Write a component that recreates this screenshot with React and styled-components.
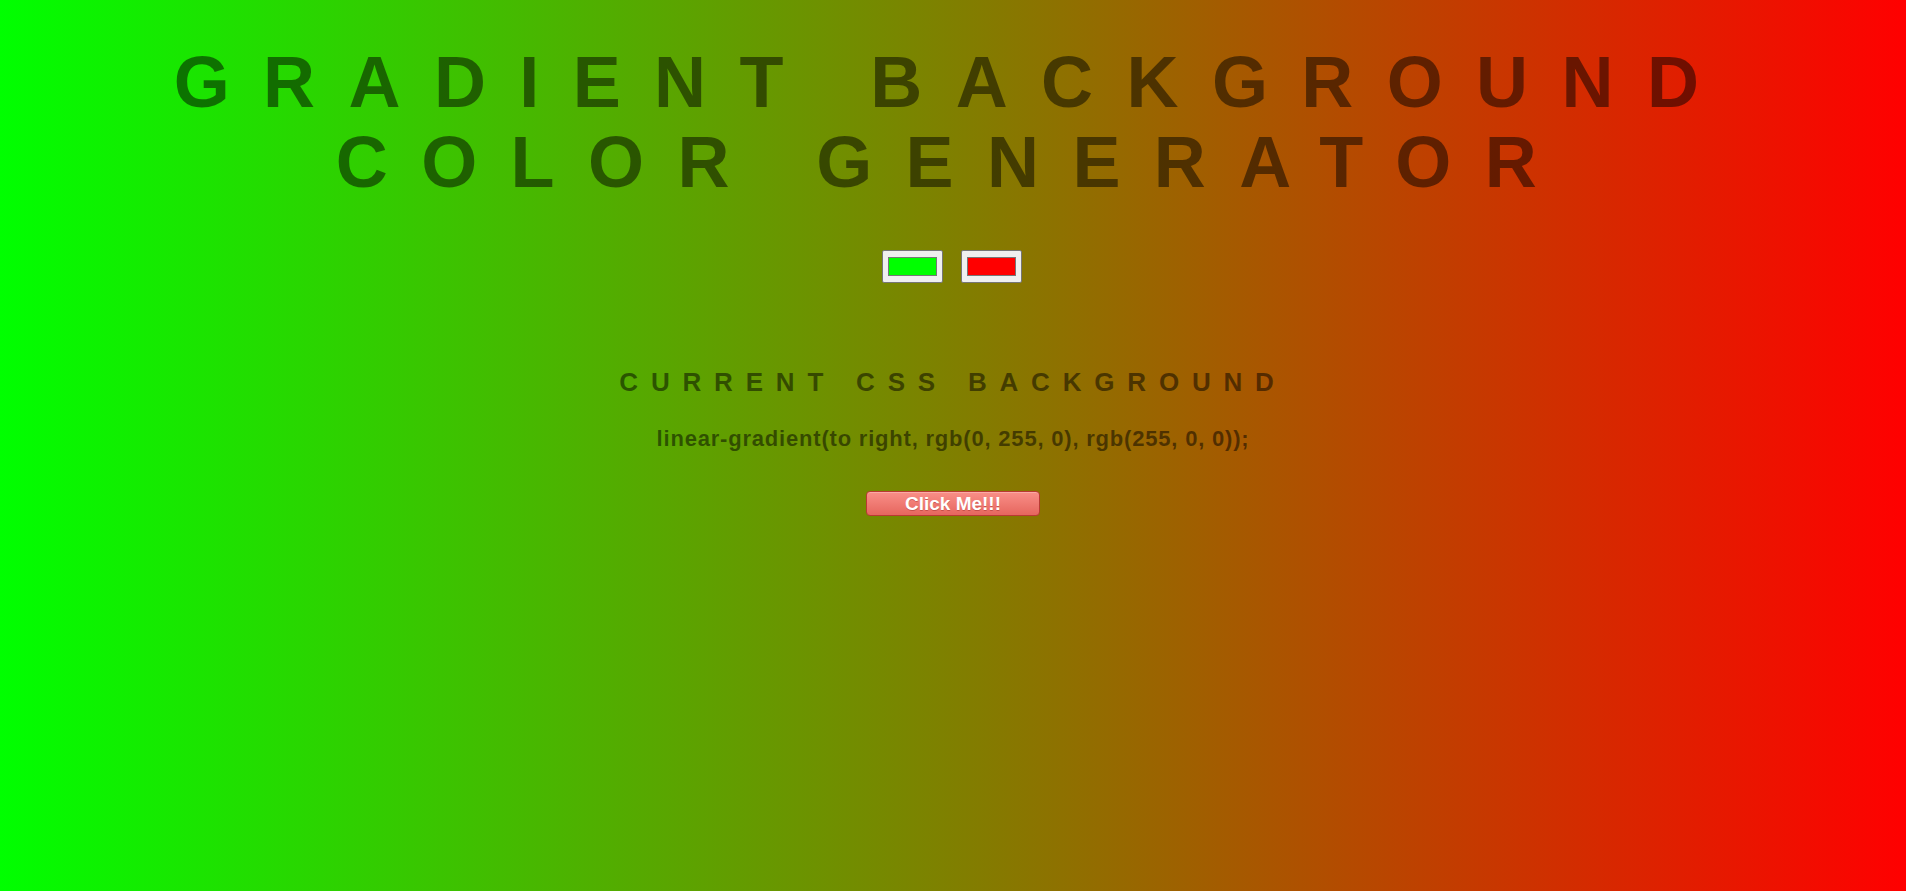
import React, { useState } from "react";
import styled, { createGlobalStyle } from "styled-components";

const GlobalStyle = createGlobalStyle`
  html, body {
    margin: 0;
    padding: 0;
    height: 100%;
  }
  body {
    font-family: "Liberation Sans", Arial, sans-serif;
  }
  #root {
    min-height: 100%;
  }
`;

const Page = styled.div`
  min-height: 100vh;
  box-sizing: border-box;
  display: flex;
  flex-direction: column;
  align-items: center;
  padding-top: 42px;
  text-align: center;
  font-family: "Liberation Sans", Arial, sans-serif;
  color: rgba(0, 0, 0, 0.5);
`;

const Title = styled.h1`
  margin: 0;
  font-size: 72px;
  line-height: 80px;
  font-weight: 700;
  letter-spacing: 33.4px;
  text-transform: uppercase;
  width: 100%;
`;

const Pickers = styled.div`
  display: flex;
  gap: 18px;
  margin-top: 48px;
  margin-right: 2px;
`;

const ColorInput = styled.input`
  -webkit-appearance: none;
  appearance: none;
  box-sizing: border-box;
  width: 61px;
  height: 33px;
  margin: 0;
  padding: 0;
  border: 1px solid #767676;
  border-radius: 2px;
  background: #efefef;
  cursor: pointer;

  &::-webkit-color-swatch-wrapper {
    padding: 6px 5px;
  }
  &::-webkit-color-swatch {
    border: 1px solid #777777;
    border-radius: 0;
  }
`;

const Subtitle = styled.h3`
  margin: 84px 0 0;
  font-size: 26px;
  line-height: 30px;
  font-weight: 700;
  letter-spacing: 12.8px;
  text-transform: uppercase;
`;

const CssText = styled.h3`
  margin: 30px 0 0;
  font-size: 22px;
  line-height: 24px;
  font-weight: 700;
  letter-spacing: 0.8px;
`;

const Button = styled.button`
  margin-top: 40px;
  box-sizing: border-box;
  width: 174px;
  height: 25px;
  padding: 0;
  border: 1px solid #b83a33;
  border-radius: 4px;
  background: linear-gradient(to bottom, #f98f88 0%, #e6665e 100%);
  box-shadow: inset 0 1px 0 rgba(255, 255, 255, 0.25);
  color: #ffffff;
  font-family: "Liberation Sans", Arial, sans-serif;
  font-size: 19px;
  font-weight: 700;
  line-height: 22px;
  text-shadow: 0 1px 0 rgba(150, 40, 35, 0.45);
  cursor: pointer;
`;

const hexToRgb = (hex) => {
  const v = hex.replace("#", "");
  const r = parseInt(v.slice(0, 2), 16);
  const g = parseInt(v.slice(2, 4), 16);
  const b = parseInt(v.slice(4, 6), 16);
  return `rgb(${r}, ${g}, ${b})`;
};

const randomHex = () =>
  "#" +
  Array.from({ length: 3 }, () =>
    Math.floor(Math.random() * 256)
      .toString(16)
      .padStart(2, "0")
  ).join("");

export default function App() {
  const [c1, setC1] = useState("#00ff00");
  const [c2, setC2] = useState("#ff0000");
  const gradient = `linear-gradient(to right, ${hexToRgb(c1)}, ${hexToRgb(c2)})`;

  return (
    <>
      <GlobalStyle />
      <Page style={{ background: gradient }}>
        <Title>Gradient Background Color Generator</Title>
        <Pickers>
          <ColorInput
            type="color"
            value={c1}
            onChange={(e) => setC1(e.target.value)}
          />
          <ColorInput
            type="color"
            value={c2}
            onChange={(e) => setC2(e.target.value)}
          />
        </Pickers>
        <Subtitle>Current CSS Background</Subtitle>
        <CssText>{gradient};</CssText>
        <Button
          onClick={() => {
            setC1(randomHex());
            setC2(randomHex());
          }}
        >
          Click Me!!!
        </Button>
      </Page>
    </>
  );
}
